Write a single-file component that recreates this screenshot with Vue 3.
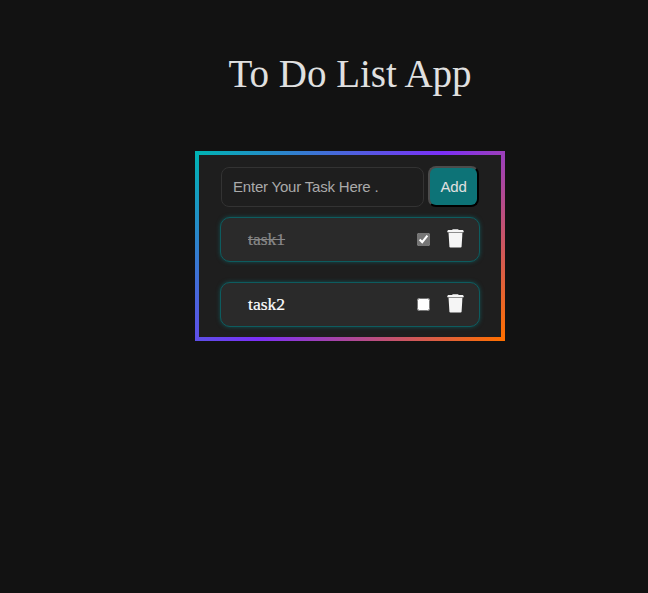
<script setup>
import { ref } from 'vue'

const draft = ref('')
const tasks = ref([
  { id: 1, title: 'task1', done: true },
  { id: 2, title: 'task2', done: false },
])

function addTask() {
  const title = draft.value.trim()
  if (!title) return
  tasks.value.push({ id: Date.now(), title, done: false })
  draft.value = ''
}

function removeTask(id) {
  tasks.value = tasks.value.filter((task) => task.id !== id)
}
</script>

<template>
  <main class="page">
    <h1 class="title">To Do List App</h1>
    <section class="panel">
      <form class="entry" @submit.prevent="addTask">
        <input v-model="draft" class="field" type="text" placeholder="Enter Your Task Here ." />
        <button class="add" type="submit">Add</button>
      </form>
      <ul class="list">
        <li v-for="task in tasks" :key="task.id" class="task">
          <span class="name" :class="{ done: task.done }">{{ task.title }}</span>
          <input v-model="task.done" class="check" type="checkbox" />
          <button class="remove" type="button" @click="removeTask(task.id)">
            <svg width="17" height="19" viewBox="0 0 17 19">
              <path d="M5.4 1V0.3H11.4V1H15.8L16.7 2V3.2H0.3V2L1.2 1Z" fill="#f5f5f5" />
              <path d="M1.3 3H15.7V4.1H1.3Z" fill="#8c8c8c" />
              <path d="M1.6 4.1H15.4L14.6 17.8Q14.5 18.6 13.7 18.6H3.3Q2.5 18.6 2.4 17.8Z" fill="#f5f5f5" />
            </svg>
          </button>
        </li>
      </ul>
    </section>
  </main>
</template>

<style>
body {
  margin: 0;
  background: #121212;
}
</style>

<style scoped>
.page {
  box-sizing: border-box;
  min-height: 593px;
  padding: 51px 0 0 52px;
  display: flex;
  flex-direction: column;
  align-items: center;
  font-family: "Liberation Serif", "Times New Roman", serif;
  color: #e0e0e0;
}
.title {
  margin: 0 0 54px;
  font-size: 39px;
  font-weight: 400;
  line-height: 46px;
}
.panel {
  box-sizing: border-box;
  width: 310px;
  height: 190px;
  padding: 11px 21px 0;
  background: #1e1e1e;
  border: 4px solid;
  border-image: linear-gradient(135deg, #00b3b3, #7b2ff7, #ff6f00) 1;
}
.entry {
  display: flex;
  align-items: center;
  gap: 4px;
  padding-left: 1px;
}
.field {
  box-sizing: border-box;
  width: 203px;
  height: 40px;
  margin-top: 1px;
  padding: 0 11px 2px;
  border: 1px solid #333;
  border-radius: 8px;
  outline: none;
  background: #1e1e1e;
  color: #e0e0e0;
  font: 15px "Liberation Sans", Arial, sans-serif;
  letter-spacing: -0.2px;
}
.field::placeholder {
  color: #aaa;
  opacity: 1;
}
.add {
  box-sizing: border-box;
  width: 51px;
  height: 41px;
  padding: 0;
  border: 2px solid;
  border-color: #4c4c4c #000 #000 #4c4c4c;
  border-radius: 8px;
  background: #0d7377;
  color: #e0e0e0;
  font: 15px "Liberation Sans", Arial, sans-serif;
  letter-spacing: -0.2px;
}
.list {
  margin: 10px 0 0;
  padding: 0;
  display: flex;
  flex-direction: column;
  gap: 20px;
  list-style: none;
}
.task {
  box-sizing: border-box;
  height: 45px;
  display: flex;
  align-items: center;
  padding: 0 15px 0 27px;
  border: 1px solid #0d5c5f;
  border-radius: 10px;
  background: #2a2a2a;
  box-shadow: 0 0 4px #0d737799;
}
.name {
  flex: 1;
  padding-bottom: 1px;
  font-size: 17.6px;
  line-height: 20px;
  color: #fff;
  -webkit-text-stroke: 0.2px currentColor;
}
.done {
  color: #888;
  text-decoration: line-through;
}
.check {
  width: 13px;
  height: 13px;
  margin: 0 17px 0 0;
  accent-color: #757575;
}
.remove {
  display: flex;
  margin-top: -3px;
  padding: 0;
  border: 0;
  background: none;
}
</style>
